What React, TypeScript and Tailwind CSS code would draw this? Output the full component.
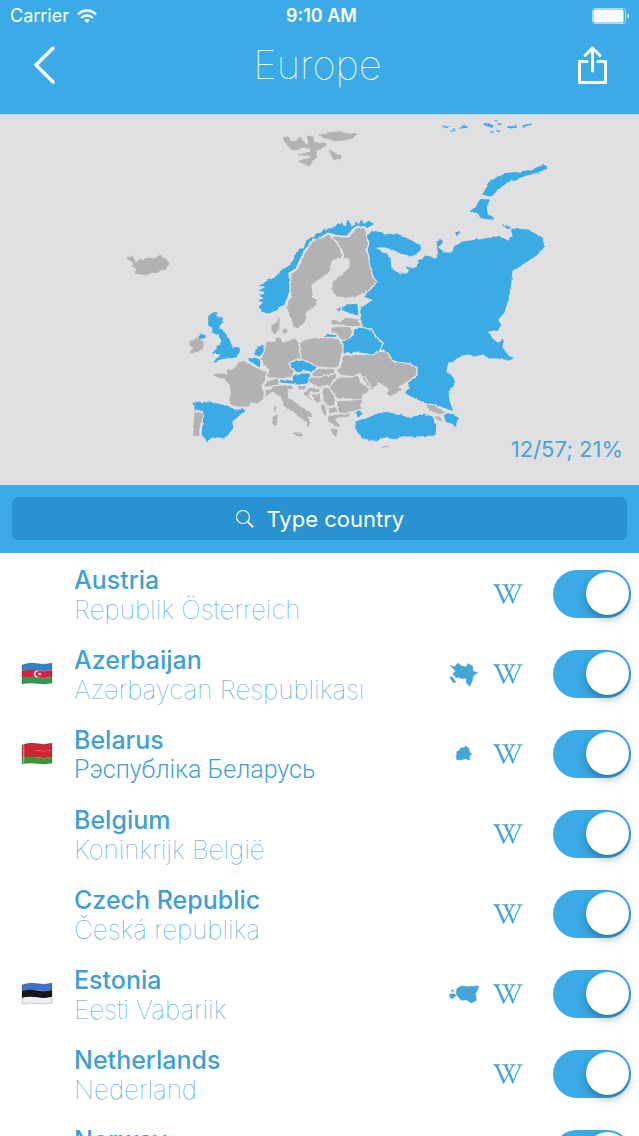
import { FaWikipediaW } from "react-icons/fa"

type Country = {
  name: string
  native: string
  cyrillic?: boolean
  flag?: "az" | "by" | "ee"
  shape?: "az" | "by" | "ee"
}

const countries: Country[] = [
  { name: "Austria", native: "Republik Österreich" },
  { name: "Azerbaijan", native: "Azərbaycan Respublikası", flag: "az", shape: "az" },
  { name: "Belarus", native: "Рэспубліка Беларусь", cyrillic: true, flag: "by", shape: "by" },
  { name: "Belgium", native: "Koninkrijk België" },
  { name: "Czech Republic", native: "Česká republika" },
  { name: "Estonia", native: "Eesti Vabariik", flag: "ee", shape: "ee" },
  { name: "Netherlands", native: "Nederland" },
  { name: "Norway", native: "Norge" },
]

// countries not visited yet
const greyLand = [
  // Finland
  "340,237 348,237 353,232 358,227 365,228 367,231 366,237 369,243 367,250 369,257 370,267 373,277 377,282 365,294 350,298 337,297 332,292 332,282 342,273 349,267 349,260 344,258 342,250 337,243 330,235",
  // Sweden
  "328,234 322,238 315,238 312,243 305,252 300,262 297,270 291,273 290,287 291,295 286,307 290,317 293,327 298,329 305,323 307,317 306,313 310,310 317,305 318,300 313,295 312,285 322,278 330,272 332,262 338,258 342,258 341,250 337,243 330,235",
  // Portugal
  "194,412 202,412 203,416 201,423 199,437 192,436 193,423",
  // France
  "213,373 222,373 227,374 225,369 230,370 235,367 238,362 243,359 252,365 258,368 268,372 267,377 262,387 264,391 264,399 258,404 252,403 248,407 237,407 228,404 230,393 229,385 223,379 214,377",
  // Germany
  "265,342 275,341 275,337 280,337 283,342 297,338 299,343 301,358 290,362 295,370 292,377 280,379 267,377 269,370 263,365 261,357 265,350",
  // Poland
  "299,342 307,339 317,337 328,338 339,339 343,347 341,358 337,368 330,368 317,367 308,362 301,359",
  // Lithuania and Latvia
  "331,327 340,326 350,327 353,330 351,337 343,341 339,338 337,334 331,333",
  "331,325 331,320 335,319 340,322 345,317 358,319 361,326 352,327 340,325",
  // Ukraine
  "343,355 373,354 380,351 388,352 390,357 395,362 407,363 417,367 417,375 408,382 399,387 403,390 396,394 390,397 387,393 388,389 385,387 379,383 375,388 369,389 363,377 358,374 352,377 340,375 337,372 342,362",
  // Slovakia, Hungary, Romania, Moldova, Bulgaria
  "312,373 318,368 335,369 335,373 320,377 312,377",
  "308,382 311,377 320,377 335,374 337,377 330,385 317,387",
  "338,377 352,377 358,375 362,383 370,389 367,393 363,395 362,400 352,399 337,399 333,393 329,387",
  "360,375 365,377 371,387 366,386",
  "336,401 352,400 363,399 361,405 361,409 348,414 339,413 337,407",
  // Switzerland and Italy
  "263,387 267,381 277,378 280,383 277,385 268,387",
  "265,390 272,387 280,385 292,385 294,389 288,390 289,397 300,405 311,412 314,418 308,417 311,423 307,429 305,422 295,414 283,406 280,397 272,393 265,398",
  // Balkans
  "297,386 307,385 305,390 298,390",
  "303,392 310,387 320,389 320,393 310,392 309,396 318,404 314,402 304,396",
  "310,394 320,394 321,400 318,404",
  "322,388 329,388 335,398 335,405 328,407 323,400",
  "320,404 325,405 327,413 325,418 321,410",
  "328,408 337,407 337,412 330,414",
  "327,420 330,415 340,414 353,412 348,417 338,418 336,420 342,427 334,427",
  // Georgia and Armenia
  "423,404 435,405 447,413 439,415 432,412",
  "433,416 440,416 444,422 437,421",
]

const greyIslands = [
  // Svalbard
  "283,138 287,137 292,142 297,142 300,137 307,146 309,142 307,136 313,137 314,142 327,145 317,150 315,158 309,166 299,161 310,158 311,155 298,155 311,152 310,148 302,147 295,151 288,146",
  "320,135 327,133 340,132 357,134 350,139 337,141 323,137",
  "329,150 333,152 342,157 340,159 333,158",
  // Iceland
  "127,258 132,257 135,261 135,264 140,259 143,260 148,258 154,259 160,256 167,260 169,264 165,269 147,275 135,273 137,269 132,267 134,263",
  // Ireland
  "190,341 193,341 197,338 200,340 203,342 203,348 198,351 190,353 189,352 194,349 190,346",
  // Denmark
  "272,325 277,323 279,318 279,325 277,331 275,334 272,331",
  "282,331 286,329 287,332 284,333",
  // Sicily, Sardinia, Corsica, Peloponnese, Cyprus
  "293,433 302,433 301,437",
  "273,417 277,416 276,425 273,425",
  "274,408 276,407 275,411",
  "331,429 337,430 336,436 333,433",
  "382,448 389,446 385,448",
]

// visited countries
const blueLand = [
  // Russia
  "366,236 372,230 383,232 385,234 397,233 410,239 421,245 422,250 413,257 400,254 385,248 377,248 387,253 391,258 392,267 400,273 407,273 408,270 403,265 410,267 415,268 418,263 417,261 428,255 433,257 436,258 437,252 436,241 440,238 445,242 439,247 445,252 452,252 453,246 463,241 475,239 477,235 478,239 490,237 497,236 500,235 508,240 512,235 510,230 512,228 528,229 543,237 545,247 537,256 517,269 513,271 512,283 509,300 505,313 499,320 502,325 499,330 489,332 493,338 498,342 505,338 503,347 509,355 515,358 510,361 498,359 488,359 483,355 477,357 467,355 457,359 453,363 449,363 447,371 453,375 456,382 453,388 449,392 450,400 454,412 443,408 435,405 423,403 413,398 404,393 408,388 408,382 417,375 417,367 407,363 395,362 390,357 388,352 380,350 383,343 377,338 372,330 362,327 360,320 359,313 361,307 367,303 371,300 363,297 365,294 377,282 373,277 370,267 369,257 367,250 369,243",
  // Norway
  "261,312 267,314 277,311 282,306 285,305 288,298 290,287 289,273 296,269 300,260 305,250 313,240 320,238 328,233 338,236 348,236 352,230 357,226 365,227 367,229 375,224 369,220 364,223 362,218 358,224 356,220 352,226 350,222 348,218 345,225 342,222 337,223 335,226 330,228 325,230 323,228 321,232 315,234 313,238 310,237 305,242 303,248 299,248 296,252 294,257 289,265 284,268 277,274 275,277 267,280 257,286 265,287 257,290 264,293 257,296 263,298 257,300 262,303 258,306",
  // Spain
  "192,404 198,401 218,403 230,406 235,409 247,409 240,416 233,422 234,428 228,436 225,438 213,438 207,442 201,435 202,423 203,415 202,411 194,410",
  // Netherlands and Belgium
  "253,355 258,346 265,345 264,352 260,357",
  "246,358 255,357 260,359 261,364 259,368 253,364",
  // Czech Republic and Austria
  "289,363 300,359 308,362 318,367 312,372 305,371 297,373 290,367",
  "280,379 292,380 293,375 300,373 310,373 311,377 307,384 297,385 290,384 280,383",
  // Estonia
  "341,307 348,304 358,303 359,315 350,314 343,311",
  // Belarus
  "343,341 352,337 354,329 362,327 372,330 377,338 383,343 379,351 373,355 360,353 343,354",
  // Turkey
  "354,412 358,410 364,414 357,418",
  "355,421 368,417 377,413 387,411 397,414 410,417 423,413 433,416 437,425 436,436 417,437 402,437 397,440 383,438 377,442 363,439 357,433 355,428",
  // Azerbaijan
  "443,415 450,413 455,415 460,418 457,423 457,429 450,424 445,422",
]

const blueIslands = [
  // Novaya Zemlya
  "483,194 485,190 488,187 491,181 497,178 504,174 513,173 519,173 532,170 543,166 547,167 540,171 523,176 507,182 498,189 491,196",
  "480,200 489,200 486,207 487,214 493,219 482,218 477,212 471,211 476,208",
  "503,225 506,226 510,228",
  "456,233 459,232 460,233 457,235",
  // Franz Josef Land
  "444,127 449,126",
  "451,131 455,130",
  "460,128 463,126 467,127",
  "484,124 488,124 493,126 487,126",
  "494,120 497,120",
  "498,124 501,124",
  "491,132 493,132",
  "497,131 499,131",
  "507,127 516,127 510,128",
  "523,126 527,125 531,124 528,125",
  // Kaliningrad
  "326,336 329,335 336,336",
  // Great Britain and Northern Ireland
  "213,313 217,313 215,318 222,318 222,322 218,327 224,332 229,340 232,348 239,348 239,352 235,357 223,358 214,361 222,354 213,353 217,350 216,347 222,345 222,340 219,335 213,332 213,327 209,325 209,317",
  "199,337 202,334 205,335 205,337 202,338",
  // Estonian islands
  "337,310 340,308 339,311",
]

const shapes = {
  az: [
    "4,10 17,15 27,3 37,12 52,15 57,5 70,12 72,28 86,32 74,40 69,58 62,73 52,62 52,48 37,50 30,45 22,48 12,35 20,28",
    "2,45 10,45 20,60 14,63",
  ],
  by: ["23,30 27,26 31,27 35,18 45,17 50,12 59,19 62,31 68,37 60,42 63,53 45,50 38,54 22,52 24,45 20,42 24,38"],
  ee: [
    "24,20 37,12 57,14 89,12 84,27 79,35 82,55 67,63 52,53 37,55 24,40 22,30",
    "2,37 14,35 22,40 10,50 4,47",
    "6,25 13,24 12,30",
  ],
}

const flagBands = {
  az: ["#2f86c2", "#d91f42", "#2f9950"],
  by: ["#cc2631", "#cc2631", "#3a9837"],
  ee: ["#3d72cc", "#16161c", "#eeeeee"],
}

function EuropeMap() {
  return (
    <svg viewBox="0 0 639 370" className="block w-full" role="img" aria-label="Map of Europe">
      <defs>
        {/* roughens the straight segments into coastlines */}
        <filter id="coast" x="0" y="0" width="100%" height="100%">
          <feTurbulence type="fractalNoise" baseFrequency="0.22" numOctaves="2" seed="4" result="noise" />
          <feDisplacementMap in="SourceGraphic" in2="noise" scale="3" xChannelSelector="R" yChannelSelector="G" />
        </filter>
      </defs>
      <g transform="translate(0 -115)" filter="url(#coast)" strokeLinejoin="round">
        <g stroke="#e3e2e4" strokeWidth="1.200">
          {greyLand.map((points) => (
            <polygon key={points} points={points} fill="#b3b1b1" />
          ))}
          {blueLand.map((points) => (
            <polygon key={points} points={points} fill="#3aabe6" />
          ))}
        </g>
        <g fill="#b3b1b1" stroke="#b3b1b1">
          {greyIslands.map((points) => (
            <polygon key={points} points={points} />
          ))}
        </g>
        <g fill="#3aabe6" stroke="#3aabe6" strokeWidth="1.500">
          {blueIslands.map((points) => (
            <polygon key={points} points={points} />
          ))}
        </g>
      </g>
    </svg>
  )
}

function Flag({ code }: { code: "az" | "by" | "ee" }) {
  const [top, middle, bottom] = flagBands[code]
  return (
    <svg viewBox="0 0 32 23" className="mb-0.5 h-[23px] w-8">
      <path d="M1 3 Q8 0 16 1.500 T31 1 V8 Q24 9.500 16 8.500 T1 9Z" fill={top} />
      <path d="M1 9 Q8 7 16 8.500 T31 8 V15 Q24 16.500 16 15.500 T1 16Z" fill={middle} />
      <path d="M1 16 Q8 14 16 15.500 T31 15 V21 Q24 22.500 16 21.500 T1 22Z" fill={bottom} />
      {code === "az" && (
        <>
          <path d="M17.500 9.600A3 3 0 1 0 17.500 14.400A2.500 2.500 0 1 1 17.500 9.600Z" fill="#fff" />
          <circle cx="18.600" cy="12" r="1.200" fill="#fff" />
        </>
      )}
      {code === "by" && <path d="M2.500 2.500V21.500" stroke="#f0c9cb" strokeWidth="1.500" strokeDasharray="1 1" />}
      <path d="M1 3 Q8 0 16 1.500 T31 1 V21 Q24 22.500 16 21.500 T1 22Z" fill="none" stroke="#000" strokeOpacity=".3" strokeWidth=".6" />
    </svg>
  )
}

function CountryRow({ country }: { country: Country }) {
  return (
    <li className="flex h-20 items-center pr-2">
      <div className="flex w-[74px] shrink-0 justify-center">{country.flag && <Flag code={country.flag} />}</div>
      <div className="min-w-0 flex-1 pt-0.5 text-[#419fd3]">
        <h2 className="text-[25px] leading-[30px] font-medium">{country.name}</h2>
        {country.cyrillic ? (
          <p className="font-['Roboto',sans-serif] text-[25px] leading-[30px] font-light">{country.native}</p>
        ) : (
          <p className="text-[26px] leading-[30px] font-thin">{country.native}</p>
        )}
      </div>
      {country.shape && (
        <button type="button" aria-label={`Show ${country.name} on the map`} className="mr-3.5">
          <svg viewBox="0 0 90 75" className="h-[25px] w-[30px]" fill="#45a5d9" stroke="#45a5d9" strokeWidth="2">
            {shapes[country.shape].map((points) => (
              <polygon key={points} points={points} />
            ))}
          </svg>
        </button>
      )}
      <a href={`#${country.name}`} aria-label={`${country.name} on Wikipedia`} className="mr-[30px] text-[#45a5d9]">
        <FaWikipediaW className="h-6 w-[30px]" />
      </a>
      <label className="relative block h-12 w-[78px] shrink-0">
        <input
          type="checkbox"
          role="switch"
          defaultChecked
          aria-label={`Visited ${country.name}`}
          className="peer block h-12 w-[78px] appearance-none rounded-full bg-gray-200 checked:bg-[#3aabe6]"
        />
        <span className="pointer-events-none absolute top-0.5 left-0.5 size-[43px] rounded-full bg-white shadow-[0_4px_8px_rgba(0,0,0,0.3)] peer-checked:left-[33px]" />
      </label>
    </li>
  )
}

export default function App() {
  return (
    <div className="flex h-screen flex-col overflow-hidden bg-white font-['Inter','Noto_Sans',sans-serif]">
      <header className="h-[114px] shrink-0 bg-[#3aabe6] text-white">
        <div className="grid h-8 grid-cols-3 items-center px-2.5 text-lg">
          <div className="flex items-center gap-2">
            <span>Carrier</span>
            <svg viewBox="0 0 20 15" className="h-[15px] w-5" fill="none" stroke="currentColor" strokeWidth="2.400">
              <path d="M1 5.500C6 .2 14 .2 19 5.500M4.200 9C7.500 5.600 12.500 5.600 15.800 9" />
              <path d="M10 14L7.200 11.200C8.800 9.700 11.200 9.700 12.800 11.200Z" fill="currentColor" stroke="none" />
            </svg>
          </div>
          <span className="pl-1 text-center font-semibold">9:10 AM</span>
          <svg viewBox="0 0 38 16" className="h-4 w-[38px] justify-self-end">
            <rect x="1.500" y=".5" width="33" height="15" rx="2.500" fill="none" stroke="#fff" strokeOpacity=".6" />
            <rect x="2.500" y="1.500" width="30" height="13" rx="1.500" fill="#fff" />
            <path d="M36.500 5.500C38.500 6 38.500 10 36.500 10.500Z" fill="#fff" />
          </svg>
        </div>
        <div className="flex h-[66px] items-center justify-between px-[30px]">
          <button type="button" aria-label="Back">
            <svg viewBox="0 0 30 40" className="h-10 w-[30px]" fill="none" stroke="currentColor" strokeWidth="3.500" strokeLinecap="round" strokeLinejoin="round">
              <path d="M23 3L6 20L23 37" />
            </svg>
          </button>
          <h1 className="text-[40px] leading-10 font-thin">Europe</h1>
          <button type="button" aria-label="Share">
            <svg viewBox="0 0 34 40" className="h-10 w-[34px]" fill="none" stroke="currentColor" strokeWidth="3" strokeLinecap="round" strokeLinejoin="round">
              <path d="M12 16.500H4.500V37.500H30.500V16.500H23" />
              <path d="M17.500 26V3M10 10.500L17.500 3L25 10.500" />
            </svg>
          </button>
        </div>
      </header>

      <section className="relative shrink-0 border-t border-[#b9dcef] bg-[#e0dfe2]">
        <EuropeMap />
        <p className="absolute right-4 bottom-[22px] text-[22px] leading-7 text-[#45a5d9]">12/57; 21%</p>
      </section>

      <div className="shrink-0 bg-[#3aabe6] px-3 pt-3 pb-[13px]">
        <label className="flex h-[43px] items-center justify-center gap-3 rounded-md bg-[#2893d0] text-white">
          <svg viewBox="0 0 20 20" className="size-5" fill="none" stroke="currentColor">
            <circle cx="8" cy="8" r="6.500" strokeWidth="1.200" />
            <path d="M13 13L18 18" strokeWidth="2" />
          </svg>
          <input
            type="text"
            aria-label="Type country"
            placeholder="Type country"
            className="w-[138px] bg-transparent text-[22px] leading-7 outline-none placeholder:text-white"
          />
        </label>
      </div>

      <ul className="min-h-0 flex-1 overflow-y-auto pt-px [scrollbar-width:none]">
        {countries.map((country) => (
          <CountryRow key={country.name} country={country} />
        ))}
      </ul>
    </div>
  )
}
